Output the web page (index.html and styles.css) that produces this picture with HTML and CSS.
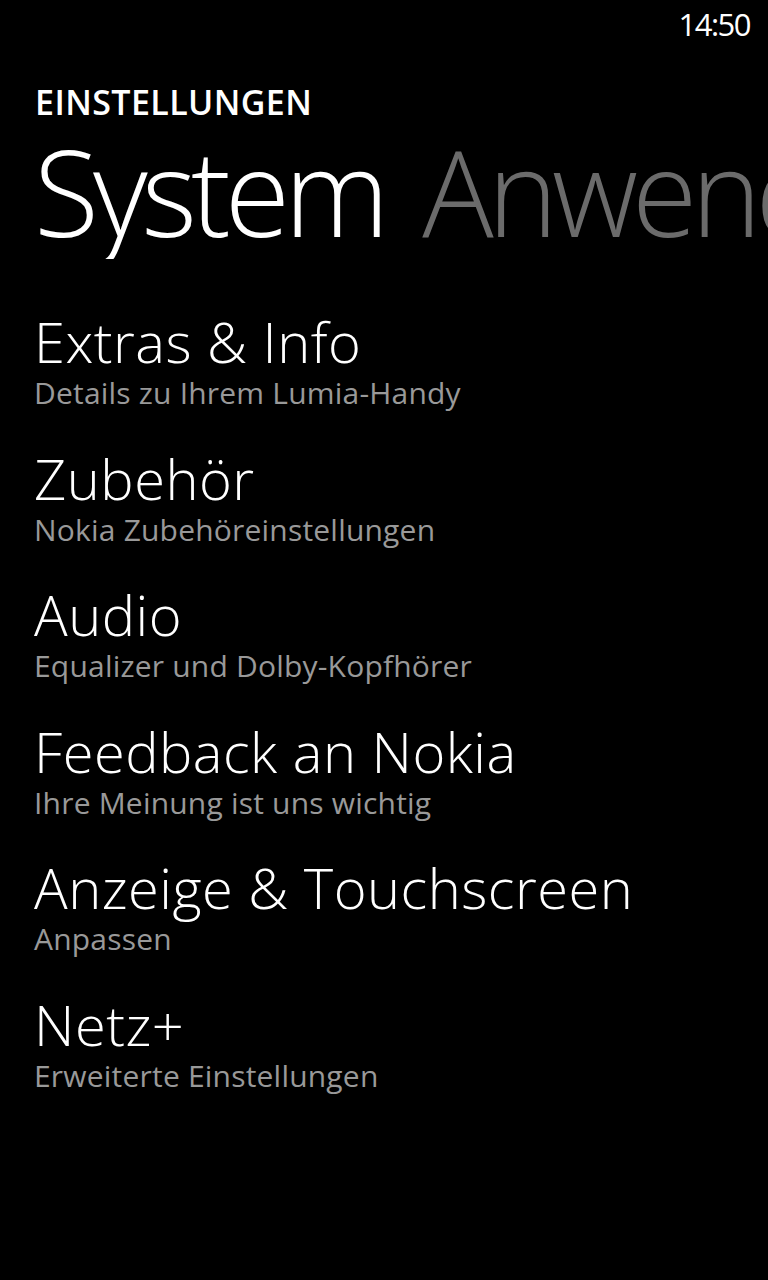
FILE: index.html
```html
<!DOCTYPE html>
<html lang="de">
<head>
    <meta charset="UTF-8">
    <title>Einstellungen</title>
    <link rel="stylesheet" href="styles.css">
</head>
<body>
    <div class="statusbar">
        <span class="uhrzeit">14:50</span>
    </div>
    <div class="kopf">
        <div class="apptitel">EINSTELLUNGEN</div>
        <div class="pivot">
            <span class="pivot-aktiv">System</span>
            <span class="pivot-naechster">Anwendungen</span>
        </div>
    </div>
    <ul class="liste">
        <li class="eintrag">
            <div class="titel">Extras &amp; Info</div>
            <div class="untertitel">Details zu Ihrem Lumia-Handy</div>
        </li>
        <li class="eintrag">
            <div class="titel">Zubehör</div>
            <div class="untertitel">Nokia Zubehöreinstellungen</div>
        </li>
        <li class="eintrag">
            <div class="titel">Audio</div>
            <div class="untertitel">Equalizer und Dolby-Kopfhörer</div>
        </li>
        <li class="eintrag">
            <div class="titel">Feedback an Nokia</div>
            <div class="untertitel">Ihre Meinung ist uns wichtig</div>
        </li>
        <li class="eintrag">
            <div class="titel">Anzeige &amp; Touchscreen</div>
            <div class="untertitel">Anpassen</div>
        </li>
        <li class="eintrag">
            <div class="titel">Netz+</div>
            <div class="untertitel">Erweiterte Einstellungen</div>
        </li>
    </ul>
</body>
</html>
```

FILE: styles.css
```css
body {
    margin: 0;
    background: #000;
    color: #fff;
    font-family: "Open Sans", "Noto Sans", sans-serif;
    width: 768px;
    height: 1280px;
    overflow: hidden;
}
.statusbar {
    display: flex;
    justify-content: flex-end;
    height: 48px;
    line-height: 48px;
    padding-right: 18px;
}
.uhrzeit {
    font-size: 31px;
    letter-spacing: -1.5px;
}
.kopf {
    padding-left: 34px;
    margin-top: 34px;
}
.apptitel {
    font-size: 34px;
    font-weight: 600;
    line-height: 40px;
    padding-left: 1px;
    letter-spacing: 0.4px;
}
.pivot {
    white-space: nowrap;
    overflow: hidden;
    font-size: 119px;
    font-weight: 300;
    line-height: 136px;
    margin-top: 1px;
    letter-spacing: -6px;
}
.pivot-naechster {
    color: #6b6b6b;
    margin-left: 14px;
}
.liste {
    list-style: none;
    margin: 50px 0 0 0;
    padding: 0 0 0 34px;
}
.eintrag {
    margin-bottom: 32.6px;
}
.titel {
    font-size: 56px;
    font-weight: 300;
    line-height: 64px;
    letter-spacing: 0.5px;
}
.untertitel {
    font-size: 30px;
    line-height: 40px;
    color: #999;
    letter-spacing: 0.2px;
}
```
